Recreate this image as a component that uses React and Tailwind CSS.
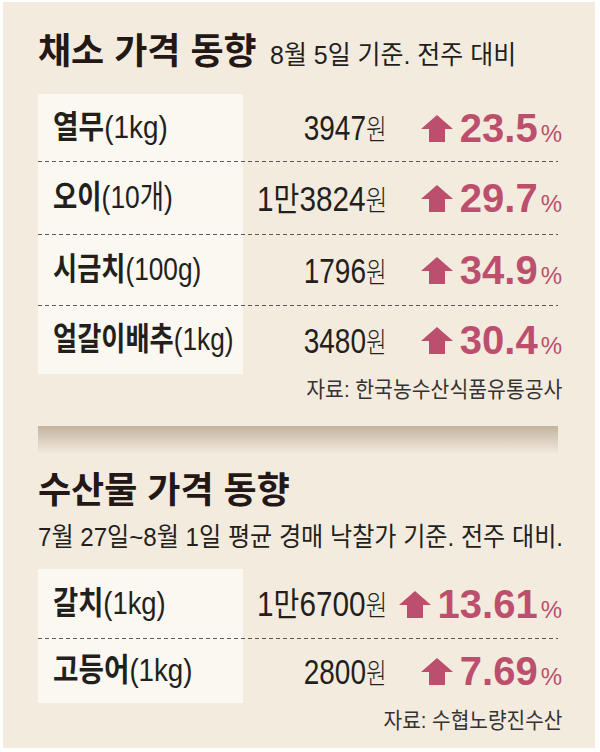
const FONT = "font-['Liberation_Sans','Noto_Sans_CJK_KR',sans-serif]";

function Arrow() {
  return (
    <svg width="32" height="27" viewBox="0 0 32 27" className="mr-[7px] shrink-0">
      <polygon points="16,0 32,14 24,14 24,27 8,27 8,14 0,14" fill="#bc4f6d" />
    </svg>
  );
}

function Change({ value }) {
  return (
    <div className="flex w-[175px] items-baseline justify-end text-[#bc4f6d]">
      <Arrow />
      <span className="text-[40px] font-bold leading-none">{value}</span>
      <span className="ml-[3px] text-[24px] leading-none">%</span>
    </div>
  );
}

function Price({ man, num }) {
  return (
    <div className="flex w-[144px] justify-end">
      <span
        className={`inline-block origin-right whitespace-nowrap leading-none text-[#231f1c] ${
          man ? "scale-x-[0.85]" : "scale-x-[0.8]"
        }`}
      >
        {man && <span className="text-[35px]">1</span>}
        {man && <span className="text-[33px]">만</span>}
        <span className="text-[35px]">{num}</span>
        <span className="text-[28px] font-light">원</span>
      </span>
    </div>
  );
}

function Label({ ko, unit, unitKo, scale }) {
  return (
    <div className="w-[205px] pl-[15px]">
      <span
        className={`inline-block origin-left whitespace-nowrap leading-none text-[#231f1c] ${scale}`}
      >
        <span className="text-[32px] font-bold">{ko}</span>
        <span className="text-[32px]">{unit}</span>
        {unitKo && <span className="text-[32px]">{unitKo}</span>}
        {unitKo && <span className="text-[32px]">)</span>}
      </span>
    </div>
  );
}

function Sep() {
  return (
    <div className="h-px w-[520px] bg-[repeating-linear-gradient(to_right,#5a5a5a_0_4px,transparent_4px_7px)]" />
  );
}

function Row({ h, label, price, change }) {
  return (
    <div className={`flex items-center ${h}`}>
      {label}
      {price}
      {change}
    </div>
  );
}

export default function App() {
  return (
    <div className={`h-[752px] w-[600px] bg-white pl-[3px] pt-[2px] ${FONT}`}>
      <div className="h-[746px] w-[592px] bg-[#f4ebdf] pl-[35px] pr-[33px] pt-[32px]">
        {/* Title 1 */}
        <div className="flex h-[40px] items-baseline whitespace-nowrap">
          <span className="text-[36px] font-bold leading-none text-[#231815]">채소 가격 동향</span>
          <span className="ml-[13px] inline-block origin-left scale-x-[0.96] text-[26px] leading-none text-[#231f1c]">
            8월 5일 기준. 전주 대비
          </span>
        </div>

        {/* Table 1 */}
        <div className="mt-[20px] w-[524px] bg-[linear-gradient(to_right,#fbf7f1_205px,transparent_205px)]">
          <Row
            h="h-[67px]"
            label={<Label ko="열무" unit="(1kg)" scale="scale-x-[0.87]" />}
            price={<Price num="3947" />}
            change={<Change value="23.5" />}
          />
          <Sep />
          <Row
            h="h-[72px]"
            label={<Label ko="오이" unit="(10" unitKo="개" scale="scale-x-[0.825]" />}
            price={<Price man num="3824" />}
            change={<Change value="29.7" />}
          />
          <Sep />
          <Row
            h="h-[70px]"
            label={<Label ko="시금치" unit="(100g)" scale="scale-x-[0.82]" />}
            price={<Price num="1796" />}
            change={<Change value="34.9" />}
          />
          <Sep />
          <Row
            h="h-[68px]"
            label={<Label ko="얼갈이배추" unit="(1kg)" scale="scale-x-[0.82]" />}
            price={<Price num="3480" />}
            change={<Change value="30.4" />}
          />
        </div>

        {/* Source 1 */}
        <div className="mt-[4px] flex h-[24px] w-[524px] items-center justify-end">
          <span className="inline-block origin-right scale-x-[0.93] whitespace-nowrap text-[22px] leading-none text-[#333]">
            자료: 한국농수산식품유통공사
          </span>
        </div>

        {/* Divider bar */}
        <div className="mt-[24px] h-[27px] w-[520px] bg-[linear-gradient(to_bottom,#c4b4a1,#f1e8dc)]" />

        {/* Title 2 */}
        <div className="mt-[18px] flex h-[40px] items-center whitespace-nowrap">
          <span className="text-[36px] font-bold leading-none text-[#231815]">수산물 가격 동향</span>
        </div>
        <div className="mt-[11px] flex h-[30px] items-center whitespace-nowrap">
          <span className="inline-block origin-left scale-x-[0.927] text-[26px] leading-none text-[#231f1c]">
            7월 27일~8월 1일 평균 경매 낙찰가 기준. 전주 대비.
          </span>
        </div>

        {/* Table 2 */}
        <div className="mt-[17px] w-[524px] bg-[linear-gradient(to_right,#fbf7f1_205px,transparent_205px)]">
          <Row
            h="h-[69px]"
            label={<Label ko="갈치" unit="(1kg)" scale="scale-x-[0.855]" />}
            price={<Price man num="6700" />}
            change={<Change value="13.61" />}
          />
          <Sep />
          <Row
            h="h-[64px]"
            label={<Label ko="고등어" unit="(1kg)" scale="scale-x-[0.865]" />}
            price={<Price num="2800" />}
            change={<Change value="7.69" />}
          />
        </div>

        {/* Source 2 */}
        <div className="mt-[6px] flex h-[24px] w-[524px] items-center justify-end">
          <span className="inline-block origin-right scale-x-[0.92] whitespace-nowrap text-[22px] leading-none text-[#333]">
            자료: 수협노량진수산
          </span>
        </div>
      </div>
    </div>
  );
}
